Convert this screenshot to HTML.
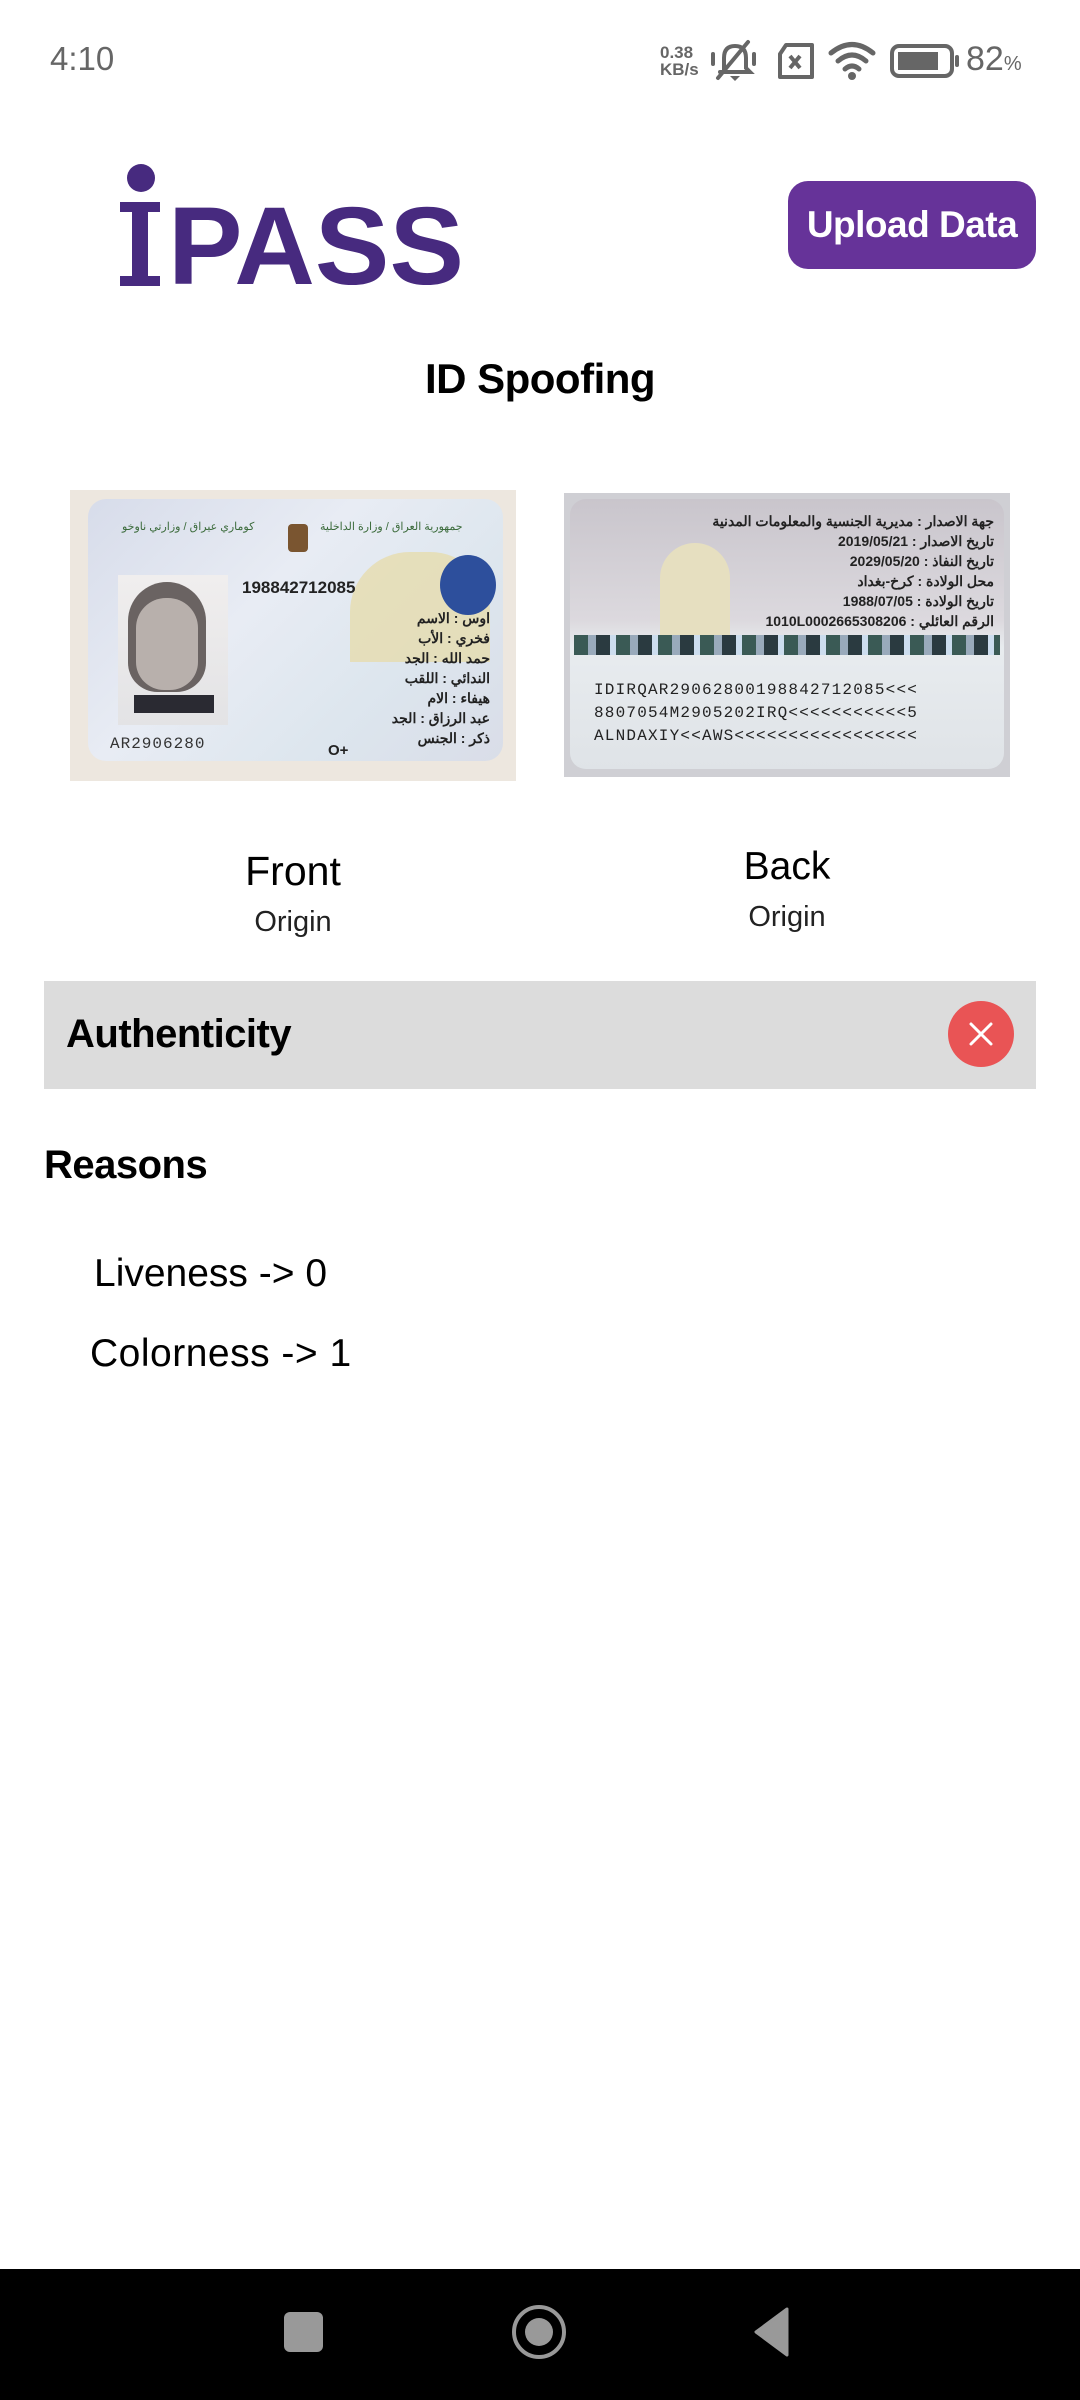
<!DOCTYPE html>
<html><head><meta charset="utf-8">
<style>
*{margin:0;padding:0;box-sizing:border-box}
body{width:1080px;height:2400px;background:#fff;position:relative;overflow:hidden;font-family:"Liberation Sans",sans-serif}
.a{position:absolute}
.ar{font-family:"Liberation Sans","Noto Sans CJK SC",sans-serif}
</style></head><body>
<!-- status bar -->
<div class="a" style="left:50px;top:40px;font-size:33px;color:#666">4:10</div>
<div class="a" style="left:660px;top:44px;font-size:17px;font-weight:bold;color:#666;line-height:17px">0.38<br>KB/s</div>
<svg class="a" style="left:710px;top:38px" width="50" height="46" viewBox="0 0 50 46"><g fill="none" stroke="#666" stroke-width="4" stroke-linecap="round"><path d="M14 32 L14 20 Q14 8 25 8 Q36 8 36 20 L36 30 L40 34 L10 34"/><path d="M8 40 L38 4"/><path d="M3 16v10M44 16v10"/></g><path d="M20 38h10l-5 5z" fill="#666"/></svg>
<svg class="a" style="left:776px;top:42px" width="40" height="38" viewBox="0 0 40 38"><path d="M10 3h26v32H4V12z" fill="none" stroke="#666" stroke-width="4" stroke-linejoin="round"/><path d="M14 14l10 12M24 14l-10 12" stroke="#666" stroke-width="4"/></svg>
<svg class="a" style="left:828px;top:40px" width="48" height="40" viewBox="0 0 48 40"><g fill="none" stroke="#666" stroke-width="5" stroke-linecap="round"><path d="M3 13 Q24 -4 45 13"/><path d="M10 21 Q24 9 38 21"/><path d="M17 29 Q24 23 31 29"/></g><circle cx="24" cy="36" r="4" fill="#666"/></svg>
<svg class="a" style="left:890px;top:44px" width="72" height="34" viewBox="0 0 72 34"><rect x="2" y="2" width="60" height="30" rx="7" fill="none" stroke="#666" stroke-width="4"/><rect x="8" y="8" width="40" height="18" fill="#666"/><rect x="65" y="11" width="4" height="12" rx="2" fill="#666"/></svg>
<div class="a" style="left:966px;top:40px;font-size:34px;color:#666">82<span style="font-size:20px">%</span></div>

<!-- logo -->
<svg class="a" style="left:112px;top:158px" width="360" height="134" viewBox="0 0 360 134">
<circle cx="29" cy="20" r="14" fill="#472a7f"/>
<path d="M8 44h40v10h-12v64h12v10H8v-10h12V54H8z" fill="#472a7f"/>
<text x="56" y="126" font-family="Liberation Sans" font-weight="bold" font-size="110" fill="#472a7f" textLength="296" lengthAdjust="spacingAndGlyphs">PASS</text>
</svg>
<div class="a" style="left:788px;top:181px;width:248px;height:88px;background:#663399;border-radius:20px;color:#fff;font-weight:bold;font-size:37px;line-height:88px;text-align:center;letter-spacing:-0.5px">Upload Data</div>
<div class="a" style="left:0;top:355px;width:1080px;text-align:center;font-size:42px;font-weight:bold;color:#000;letter-spacing:-0.5px">ID Spoofing</div>

<!-- front card -->
<div class="a" style="left:70px;top:490px;width:446px;height:291px;background:#ede7df;overflow:hidden">
 <div class="a" style="left:18px;top:9px;width:415px;height:262px;border-radius:18px;background:linear-gradient(135deg,#d7dcea,#e8ecf4 40%,#dde6ee 70%,#d9dde8)"></div>
 <div class="a" style="left:280px;top:62px;width:140px;height:110px;border-radius:60px 60px 0 0;background:#e6dcae;opacity:.8"></div>
 <div class="a" style="left:370px;top:65px;width:56px;height:60px;border-radius:50%;background:#2d4f9c"></div>
 <div class="a" style="left:48px;top:85px;width:110px;height:150px;background:linear-gradient(#f0eeee,#e3e3e5)"></div>
 <div class="a" style="left:58px;top:92px;width:78px;height:110px;border-radius:40px 40px 30px 30px;background:#6a6362"></div>
 <div class="a" style="left:66px;top:108px;width:62px;height:92px;border-radius:30px 30px 28px 28px;background:#b8b0ac"></div>
 <div class="a" style="left:64px;top:205px;width:80px;height:18px;background:#2a2a32"></div>
 <div class="a" style="left:218px;top:34px;width:20px;height:28px;background:#7a5530;border-radius:4px"></div>
 <div class="a ar" style="left:250px;top:30px;font-size:11px;color:#3a6a3a" dir="rtl">جمهورية العراق / وزارة الداخلية</div>
 <div class="a ar" style="left:52px;top:30px;font-size:11px;color:#3a6a3a">كوماري عيراق / وزارتي ناوخو</div>
 <div class="a" style="left:172px;top:88px;font-size:17px;font-weight:bold;color:#222">198842712085</div>
 <div class="a ar" style="left:260px;top:118px;font-size:14px;font-weight:bold;color:#222;line-height:20px;text-align:right;width:160px">اوس : الاسم<br>فخري : الأب<br>حمد الله : الجد<br>الندائي : اللقب<br>هيفاء : الام<br>عبد الرزاق : الجد<br>ذكر : الجنس</div>
 <div class="a" style="left:40px;top:245px;font-size:16px;font-family:'Liberation Mono',monospace;color:#333;letter-spacing:1px">AR2906280</div>
 <div class="a" style="left:258px;top:252px;font-size:15px;font-weight:bold;color:#222">O+</div>
</div>

<!-- back card -->
<div class="a" style="left:564px;top:493px;width:446px;height:284px;background:#cfcfd4;overflow:hidden">
 <div class="a" style="left:6px;top:6px;width:434px;height:270px;border-radius:16px;background:linear-gradient(#c9c5cc,#dcd9de 45%,#e8ecef 55%,#dfe3e7)"></div>
 <div class="a" style="left:96px;top:50px;width:70px;height:110px;border-radius:35px 35px 0 0;background:#e6dfc0"></div>
 <div class="a ar" style="left:40px;top:18px;width:390px;text-align:right;font-size:14px;font-weight:bold;color:#222;line-height:20px" dir="rtl">جهة الاصدار : مديرية الجنسية والمعلومات المدنية<br>تاريخ الاصدار : 2019/05/21<br>تاريخ النفاذ : 2029/05/20<br>محل الولادة : كرخ-بغداد<br>تاريخ الولادة : 1988/07/05<br>الرقم العائلي : 1010L0002665308206</div>
 <div class="a" style="left:10px;top:142px;width:426px;height:20px;background:repeating-linear-gradient(90deg,#3a5a55 0 14px,#9ab 14px 22px,#2a3a40 22px 36px,#cde 36px 42px)"></div>
 <div class="a" style="left:30px;top:186px;font-family:'Liberation Mono',monospace;font-size:16px;color:#222;line-height:23px;letter-spacing:1.2px">IDIRQAR290628001988427120​85&lt;&lt;&lt;<br>8807054M2905202IRQ&lt;&lt;&lt;&lt;&lt;&lt;&lt;&lt;&lt;&lt;&lt;5<br>ALNDAXIY&lt;&lt;AWS&lt;&lt;&lt;&lt;&lt;&lt;&lt;&lt;&lt;&lt;&lt;&lt;&lt;&lt;&lt;&lt;&lt;</div>
</div>

<div class="a" style="left:70px;top:848px;width:446px;text-align:center;font-size:41px;color:#000">Front</div>
<div class="a" style="left:70px;top:906px;width:446px;text-align:center;font-size:29px;color:#222">Origin</div>
<div class="a" style="left:564px;top:845px;width:446px;text-align:center;font-size:39px;color:#000">Back</div>
<div class="a" style="left:564px;top:901px;width:446px;text-align:center;font-size:29px;color:#222">Origin</div>

<!-- authenticity -->
<div class="a" style="left:44px;top:981px;width:992px;height:108px;background:#dcdcdc"></div>
<div class="a" style="left:66px;top:1012px;font-size:40px;font-weight:bold;color:#000;letter-spacing:-0.5px">Authenticity</div>
<div class="a" style="left:948px;top:1001px;width:66px;height:66px;border-radius:50%;background:#e95455"></div>
<svg class="a" style="left:948px;top:1001px" width="66" height="66"><path d="M23 23L43 43M43 23L23 43" stroke="#fff" stroke-width="3" stroke-linecap="round"/></svg>

<div class="a" style="left:44px;top:1143px;font-size:40px;font-weight:bold;color:#000;letter-spacing:-0.5px">Reasons</div>
<div class="a" style="left:94px;top:1252px;font-size:39px;color:#000">Liveness -&gt; 0</div>
<div class="a" style="left:90px;top:1332px;font-size:39px;color:#000;letter-spacing:0.5px">Colorness -&gt; 1</div>

<!-- nav bar -->
<div class="a" style="left:0;top:2269px;width:1080px;height:131px;background:#000"></div>
<div class="a" style="left:284px;top:2312px;width:39px;height:40px;border-radius:6px;background:#999"></div>
<div class="a" style="left:512px;top:2305px;width:54px;height:54px;border-radius:50%;border:4px solid #999"></div>
<div class="a" style="left:525px;top:2318px;width:28px;height:28px;border-radius:50%;background:#999"></div>
<svg class="a" style="left:752px;top:2306px" width="40" height="52"><path d="M35 3L4 26L35 49z" fill="#999" stroke="#999" stroke-width="3" stroke-linejoin="round"/></svg>
</body></html>
